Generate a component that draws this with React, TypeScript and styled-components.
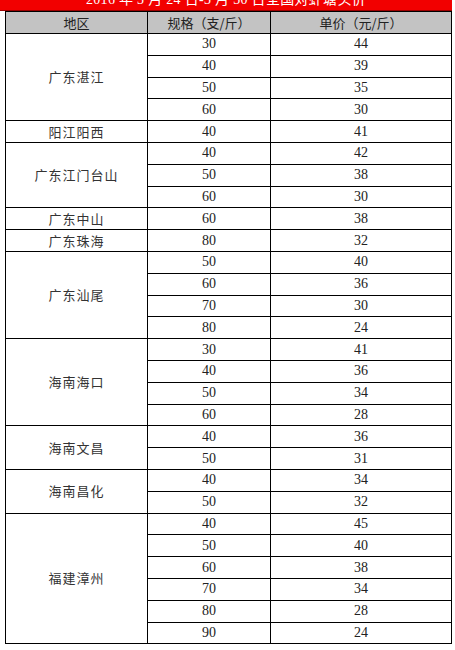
import styled, { createGlobalStyle } from "styled-components";

const GlobalStyle = createGlobalStyle`
  html {
    overflow: hidden;
  }
  html, body {
    margin: 0;
    padding: 0;
    background: #fff;
  }
  body {
    font-family: "Liberation Serif", "Noto Sans CJK SC", serif;
  }
`;

type Group = { region: string; rows: [number, number][] };

const data: Group[] = [
  { region: "广东湛江", rows: [[30, 44], [40, 39], [50, 35], [60, 30]] },
  { region: "阳江阳西", rows: [[40, 41]] },
  { region: "广东江门台山", rows: [[40, 42], [50, 38], [60, 30]] },
  { region: "广东中山", rows: [[60, 38]] },
  { region: "广东珠海", rows: [[80, 32]] },
  { region: "广东汕尾", rows: [[50, 40], [60, 36], [70, 30], [80, 24]] },
  { region: "海南海口", rows: [[30, 41], [40, 36], [50, 34], [60, 28]] },
  { region: "海南文昌", rows: [[40, 36], [50, 31]] },
  { region: "海南昌化", rows: [[40, 34], [50, 32]] },
  { region: "福建漳州", rows: [[40, 45], [50, 40], [60, 38], [70, 34], [80, 28], [90, 24]] },
];

const Page = styled.div`
  width: 455px;
  padding-bottom: 8px;
  background: #fff;
`;

const Title = styled.div`
  width: 452px;
  height: 22px;
  margin-top: -11px;
  background: #f20000;
  border-bottom: 1px solid #9a0000;
  box-sizing: border-box;
  color: #fff;
  font-size: 14px;
  line-height: 22px;
  text-align: center;
  letter-spacing: 0.3px;
`;

const Table = styled.table`
  margin-left: 5px;
  width: 446px;
  border-collapse: collapse;
  table-layout: fixed;
  border: 1.5px solid #000;
  font-size: 13px;
  color: #222;
`;

const HeadCell = styled.th`
  height: 21px;
  background: #c3c3c3;
  font-weight: normal;
  border: 1px solid #000;
  padding: 0;
  text-align: center;
  font-family: "Noto Sans CJK SC", sans-serif;
  font-size: 13px;
  line-height: 18px;
`;

const Row = styled.tr`
  height: 21.8px;
`;

const RegionCell = styled.td`
  border: 1px solid #000;
  padding: 0;
  text-align: center;
  vertical-align: middle;
  font-family: "Noto Sans CJK SC", sans-serif;
  font-size: 13px;
  line-height: 18px;
  color: #333;
  letter-spacing: 1px;
`;

const NumCell = styled.td`
  border: 1px solid #000;
  padding: 0;
  text-align: center;
  font-size: 14px;
  line-height: 18px;
`;

export default function App() {
  return (
    <Page>
      <GlobalStyle />
      <Title>2016 年 3 月 24 日-3 月 30 日全国对虾塘头价</Title>
      <Table>
        <colgroup>
          <col style={{ width: 142 }} />
          <col style={{ width: 123 }} />
          <col style={{ width: 181 }} />
        </colgroup>
        <thead>
          <tr>
            <HeadCell>地区</HeadCell>
            <HeadCell>规格（支/斤）</HeadCell>
            <HeadCell>单价（元/斤）</HeadCell>
          </tr>
        </thead>
        <tbody>
          {data.map((g) =>
            g.rows.map(([size, price], i) => (
              <Row key={g.region + i}>
                {i === 0 && <RegionCell rowSpan={g.rows.length}>{g.region}</RegionCell>}
                <NumCell>{size}</NumCell>
                <NumCell>{price}</NumCell>
              </Row>
            ))
          )}
        </tbody>
      </Table>
    </Page>
  );
}
